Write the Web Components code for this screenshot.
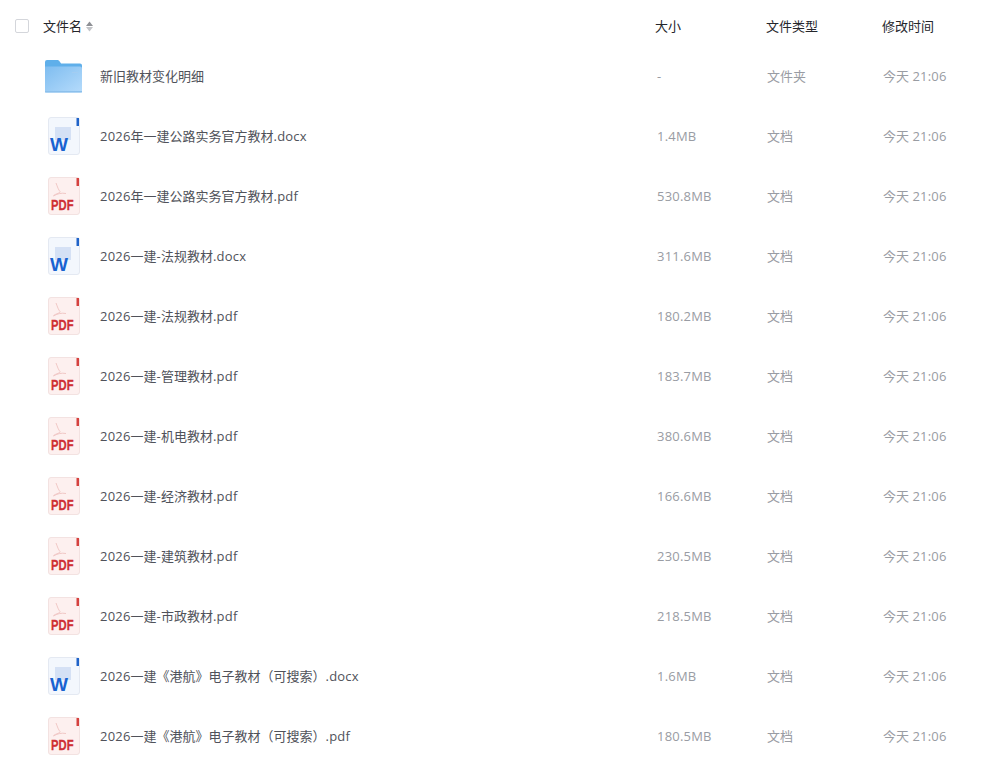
<!DOCTYPE html>
<html lang="zh-CN">
<head>
<meta charset="utf-8">
<title>文件列表</title>
<style>
  html, body { margin: 0; background: #fff; }
  body { font-family: "Open Sans", "Noto Sans CJK SC", "Liberation Sans", sans-serif; overflow: hidden; line-height: 20px; }
</style>
</head>
<body>
<file-table></file-table>
<script>
const ICONS = {
    folder: `
        <svg width="38" height="34" viewBox="0 0 38 34">
            <defs>
                <linearGradient id="f" x1="0" y1="0" x2="1" y2="1">
                    <stop offset="0" stop-color="#7fbdf0"/>
                    <stop offset="1" stop-color="#b5dbfb"/>
                </linearGradient>
            </defs>
            <path d="M0 3a2 2 0 0 1 2-2h10.500a2 2 0 0 1 1.600.800l2 2.700H35a2 2 0 0 1 2 2V12H0z" fill="#5fafea"/>
            <path d="M0 7.500h35a2 2 0 0 1 2 2V32a1.500 1.500 0 0 1-1.500 1.500H1.500A1.500 1.500 0 0 1 0 32z" fill="url(#f)"/>
            <rect x="0" y="32" width="37" height="1.500" fill="#8cc0ec"/>
            <rect x="27" y="13" width="6" height="1" fill="#a3cdf2"/>
        </svg>`,
    word: `
        <svg width="36" height="40" viewBox="0 0 36 40">
            <rect x="2.500" y="1.500" width="31" height="37" rx="2.500" fill="#f3f7fd" stroke="#e4e9f2"/>
            <rect x="9" y="11" width="16" height="13" fill="#d5e1f5"/>
            <rect x="30.500" y="2" width="2.500" height="8" fill="#1f62c8"/>
            <text x="4" y="34.500" font-family="Liberation Sans" font-weight="700" font-size="18" fill="#1a63d0" textLength="18" lengthAdjust="spacingAndGlyphs">W</text>
        </svg>`,
    pdf: `
        <svg width="36" height="40" viewBox="0 0 36 40">
            <rect x="2.500" y="1.500" width="31" height="37" rx="2.500" fill="#fdf0ef" stroke="#f3e2e1"/>
            <rect x="30.500" y="2" width="2.500" height="8" fill="#d5413f"/>
            <path d="M10 7c1.500 4 2.500 7 4 8.500s-6 2.500-6.500 4.500c3-2 8-3.500 12.500-2.500" fill="none" stroke="#f1c8c6" stroke-width="1"/>
            <text x="5" y="34" font-family="Liberation Sans" font-weight="700" font-size="15" fill="#cf3034" stroke="#cf3034" stroke-width=".3" textLength="22.500" lengthAdjust="spacingAndGlyphs">PDF</text>
        </svg>`
};

// latin runs sit a touch wider than the cjk ones in the original
const spaced = s => s.replace(/[\x21-\x7e]+/g, m => `<span class="lt">${m}</span>`);

class FileIcon extends HTMLElement {
    connectedCallback() {
        this.attachShadow({ mode: 'open' }).innerHTML = `
            <style>
                :host { display: flex; width: 38px; height: 40px; align-items: center; justify-content: center; }
                svg { display: block; }
            </style>
            ${ICONS[this.getAttribute('type')]}
        `;
    }
}
customElements.define('file-icon', FileIcon);

class FileRow extends HTMLElement {
    connectedCallback() {
        const a = n => this.getAttribute(n);
        const icon = { folder: 'folder', docx: 'word', pdf: 'pdf' }[a('kind')];
        this.attachShadow({ mode: 'open' }).innerHTML = `
            <style>
                :host {
                    display: grid;
                    grid-template-columns: 100px 557px 110px 116px 1fr;
                    align-items: center;
                    height: 60px;
                    font-size: 13px;
                    color: #999ca3;
                }
                .ic { padding-left: 45px; }
                .name { color: #50525a; white-space: nowrap; }
                .lt { letter-spacing: .2px; }
            </style>
            <div class="ic"><file-icon type="${icon}"></file-icon></div>
            <div class="name">${spaced(a('name'))}</div>
            <div>${spaced(a('size'))}</div>
            <div>${a('ftype')}</div>
            <div>${spaced(a('time'))}</div>
        `;
    }
}
customElements.define('file-row', FileRow);

class FileHeader extends HTMLElement {
    connectedCallback() {
        this.attachShadow({ mode: 'open' }).innerHTML = `
            <style>
                :host {
                    display: grid;
                    grid-template-columns: 43px 612px 111px 116px 1fr;
                    align-items: center;
                    height: 52px;
                    font-size: 13px;
                    color: #25262b;
                }
                .check { padding-left: 15px; }
                .box {
                    width: 12px;
                    height: 12px;
                    border: 1px solid #d4d6db;
                    border-radius: 2px;
                }
                .name { display: flex; align-items: center; gap: 4px; }
                svg { display: block; }
            </style>
            <div class="check"><div class="box"></div></div>
            <div class="name">文件名
                <svg width="7" height="11" viewBox="0 0 7 11">
                    <path d="M3.500 0.500L7 5H0z" fill="#8e9095"/>
                    <path d="M3.500 10.500L0 6h7z" fill="#c2c4c8"/>
                </svg>
            </div>
            <div>大小</div>
            <div>文件类型</div>
            <div>修改时间</div>
        `;
    }
}
customElements.define('file-header', FileHeader);

class FileTable extends HTMLElement {
    connectedCallback() {
        const files = [
            ['新旧教材变化明细', 'folder', '-', '文件夹'],
            ['2026年一建公路实务官方教材.docx', 'docx', '1.4MB', '文档'],
            ['2026年一建公路实务官方教材.pdf', 'pdf', '530.8MB', '文档'],
            ['2026一建-法规教材.docx', 'docx', '311.6MB', '文档'],
            ['2026一建-法规教材.pdf', 'pdf', '180.2MB', '文档'],
            ['2026一建-管理教材.pdf', 'pdf', '183.7MB', '文档'],
            ['2026一建-机电教材.pdf', 'pdf', '380.6MB', '文档'],
            ['2026一建-经济教材.pdf', 'pdf', '166.6MB', '文档'],
            ['2026一建-建筑教材.pdf', 'pdf', '230.5MB', '文档'],
            ['2026一建-市政教材.pdf', 'pdf', '218.5MB', '文档'],
            ['2026一建《港航》电子教材（可搜索）.docx', 'docx', '1.6MB', '文档'],
            ['2026一建《港航》电子教材（可搜索）.pdf', 'pdf', '180.5MB', '文档']
        ];
        const rows = files.map(f => `
            <file-row name="${f[0]}" kind="${f[1]}" size="${f[2]}" ftype="${f[3]}" time="今天 21:06"></file-row>
        `).join('');
        this.attachShadow({ mode: 'open' }).innerHTML = `
            <style>
                :host { display: block; }
                .rows { margin-top: -6px; }
            </style>
            <file-header></file-header>
            <div class="rows">${rows}</div>
        `;
    }
}
customElements.define('file-table', FileTable);
</script>
</body>
</html>
